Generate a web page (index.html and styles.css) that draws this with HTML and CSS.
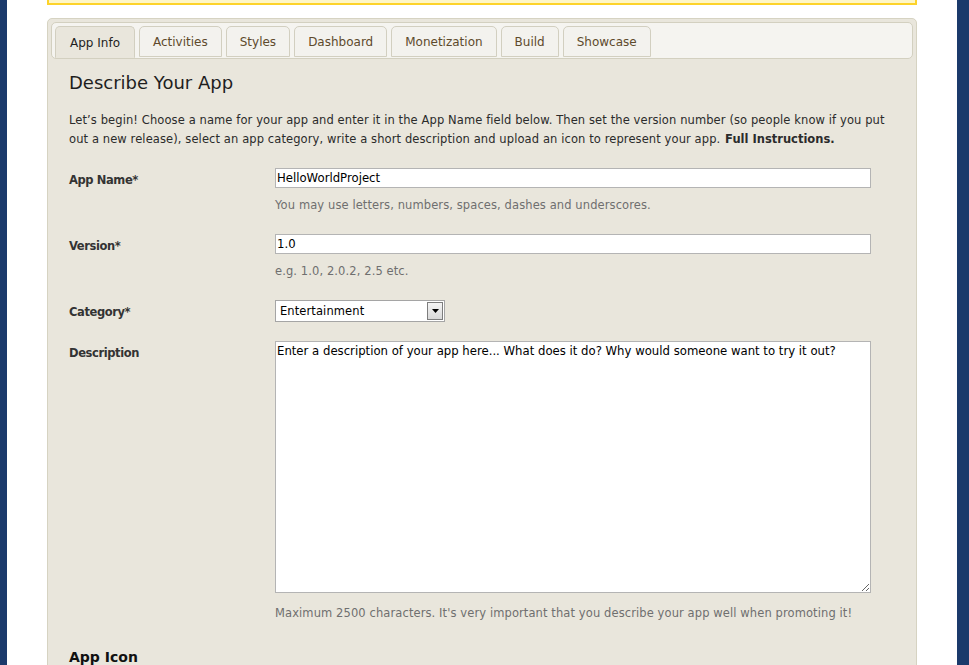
FILE: index.html
```html
<!DOCTYPE html>
<html lang="en">
<head>
<meta charset="utf-8">
<title>App Info</title>
<link rel="stylesheet" href="styles.css">
</head>
<body>
<div class="page">
  <div class="notice"></div>
  <div class="panel">
    <ul class="tabs">
      <li class="tab active">App Info</li>
      <li class="tab">Activities</li>
      <li class="tab">Styles</li>
      <li class="tab">Dashboard</li>
      <li class="tab">Monetization</li>
      <li class="tab">Build</li>
      <li class="tab">Showcase</li>
    </ul>
    <div class="content">
      <h1 class="title">Describe Your App</h1>
      <p class="intro">Let’s begin! Choose a name for your app and enter it in the App Name field below. Then set the version number (so people know if you put <span class="intro-rest">out a new release), select an app category, write a short description and upload an icon to represent your app.</span> <a class="link" href="#">Full Instructions.</a></p>

      <div class="row">
        <label class="label">App Name*</label>
        <div class="field">
          <input class="input" type="text" value="HelloWorldProject">
          <div class="hint">You may use letters, numbers, spaces, dashes and underscores.</div>
        </div>
      </div>

      <div class="row">
        <label class="label">Version*</label>
        <div class="field">
          <input class="input" type="text" value="1.0">
          <div class="hint">e.g. 1.0, 2.0.2, 2.5 etc.</div>
        </div>
      </div>

      <div class="row">
        <label class="label">Category*</label>
        <div class="field">
          <div class="select">
            <span class="select-text">Entertainment</span>
            <span class="select-btn"><svg width="7" height="4" viewBox="0 0 7 4"><path d="M0 0h7L3.5 4z" fill="#000"/></svg></span>
          </div>
        </div>
      </div>

      <div class="row">
        <label class="label">Description</label>
        <div class="field">
          <textarea class="textarea">Enter a description of your app here... What does it do? Why would someone want to try it out?</textarea>
          <div class="hint hint-ta">Maximum 2500 characters. It's very important that you describe your app well when promoting it!</div>
        </div>
      </div>

      <h2 class="subtitle">App Icon</h2>
    </div>
  </div>
</div>
</body>
</html>
```

FILE: styles.css
```css
html, body {
  margin: 0;
  padding: 0;
}
body {
  background: #1b3a6b;
  font-family: "DejaVu Sans", Verdana, sans-serif;
  font-size: 11.5px;
  letter-spacing: 0.1px;
  color: #2b2b2b;
}
.page {
  margin: 0 12px 0 7px;
  background: #ffffff;
  height: 665px;
  padding: 0 40px;
  overflow: hidden;
}
.notice {
  height: 3px;
  background: #fef6c6;
  border: 2px solid #fdd32a;
  border-top: none;
}
.panel {
  margin-top: 13px;
  background: #e9e6dc;
  border: 1px solid #d6d3c2;
  border-radius: 5px;
  padding: 3px;
  height: 700px;
}
.tabs {
  display: flex;
  gap: 4px;
  list-style: none;
  margin: 0;
  padding: 3px 3px 0;
  height: 32px;
  background: #f5f4f0;
  border: 1px solid #d3d0c0;
  border-radius: 5px;
}
.tab {
  height: 31px;
  box-sizing: border-box;
  padding: 1px 13px 0;
  display: flex;
  align-items: center;
  background: #f3f2ee;
  border: 1px solid #d2cfc0;
  border-radius: 5px 5px 0 0;
  font-size: 12px;
  letter-spacing: 0;
  color: #5e4a2c;
}
.tab:first-child {
  padding: 1px 14px 0;
}
.tab.active {
  background: #e9e6dc;
  color: #1e1e1e;
  border-bottom-color: #e9e6dc;
  height: 32px;
}
.content {
  padding: 0 18px;
}
.title {
  margin: 12px 0 0;
  font-size: 18px;
  line-height: 24px;
  font-weight: normal;
  letter-spacing: 0;
  color: #1e1e1e;
}
.intro {
  margin: 16px 0 0;
  line-height: 19px;
}
.link {
  margin-left: 1px;
  color: #2b2b2b;
  font-weight: bold;
  letter-spacing: 0;
  text-decoration: none;
}
.row {
  display: grid;
  grid-template-columns: 206px 1fr;
  margin-top: 19px;
}
.label {
  padding-top: 3px;
  line-height: 19px;
  font-weight: bold;
  font-size: 11.5px;
  letter-spacing: -0.4px;
  color: #333333;
}
.field {
  display: flex;
  flex-direction: column;
  align-items: flex-start;
}
.input {
  width: 596px;
  height: 20px;
  box-sizing: border-box;
  margin: 0;
  padding: 0 1px;
  border: 1px solid #b4b4b4;
  background: #fff;
  font-family: "DejaVu Sans", Verdana, sans-serif;
  font-size: 11.7px;
  color: #000;
}
.hint {
  margin-top: 7px;
  padding-top: 1px;
  line-height: 19px;
  color: #6f6f6f;
}
.hint-ta {
  margin-top: 10px;
}
.select {
  width: 170px;
  height: 22px;
  box-sizing: border-box;
  border: 1px solid #a5a5a5;
  background: #fff;
  display: flex;
  align-items: center;
  justify-content: space-between;
  padding: 0 1px 0 4px;
  color: #000;
}
.select-btn {
  width: 16px;
  height: 18px;
  box-sizing: border-box;
  border: 1px solid #7d7d7d;
  background: linear-gradient(#f4f4f4, #d9d9d9);
  display: flex;
  align-items: center;
  justify-content: center;
}
.textarea {
  display: block;
  width: 596px;
  height: 252px;
  box-sizing: border-box;
  margin: 0;
  padding: 1px;
  border: 1px solid #b4b4b4;
  background: #fff;
  font-family: "DejaVu Sans", Verdana, sans-serif;
  font-size: 11.7px;
  line-height: 17px;
  color: #000;
  resize: both;
}
.subtitle {
  margin: 25px 0 0;
  font-size: 14px;
  line-height: 19px;
  font-weight: bold;
  letter-spacing: 0;
  color: #111;
}
```
